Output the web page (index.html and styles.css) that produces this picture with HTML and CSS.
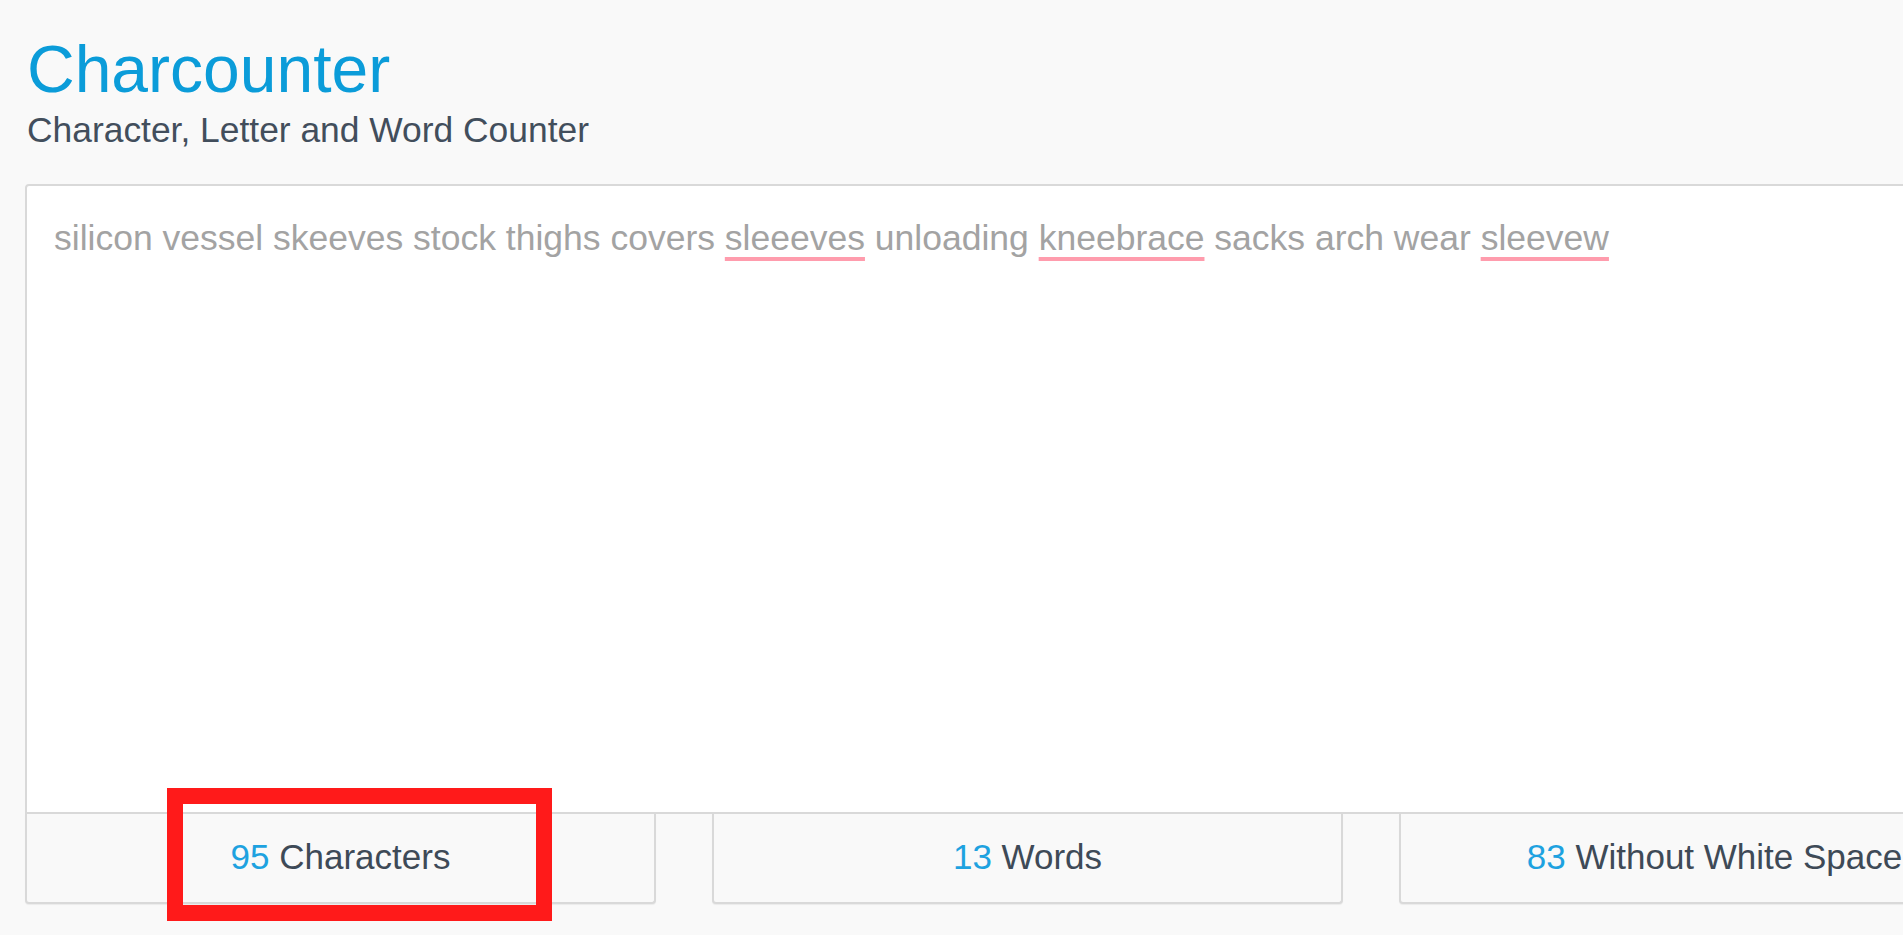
FILE: index.html
```html
<!DOCTYPE html>
<html lang="en">
<head>
    <meta charset="UTF-8">
    <meta name="viewport" content="width=device-width, initial-scale=1.0">
    <title>Charcounter</title>
    <link rel="stylesheet" href="styles.css">
</head>
<body>
    <div class="page">
        <h1 class="title">Charcounter</h1>
        <p class="subtitle">Character, Letter and Word Counter</p>

        <div class="editor">silicon vessel skeeves stock thighs covers <span class="misspelled">sleeeves</span> unloading <span class="misspelled">kneebrace</span> sacks arch wear <span class="misspelled">sleevew</span></div>

        <div class="stats">
            <div class="stat">
                <span class="count">95</span> Characters
                <div class="highlight"></div>
            </div>
            <div class="stat"><span class="count">13</span> Words</div>
            <div class="stat"><span class="count">83</span> Without White Space</div>
        </div>
    </div>
</body>
</html>
```

FILE: styles.css
```css
body {
    font-family: "Liberation Sans", Arial, sans-serif;
    background-color: #f9f9f9;
    margin: 0;
    overflow: hidden;
}
.page {
    width: 2005px;
    padding-left: 25px;
    padding-bottom: 40px;
}
.title {
    font-size: 66px;
    font-weight: normal;
    line-height: 66px;
    color: #0b9cd9;
    margin: 36px 0 0 2px;
}
.subtitle {
    font-size: 35.4px;
    line-height: 40px;
    color: #424e5c;
    margin: 8px 0 34px 2px;
}
.editor {
    height: 594px;
    background-color: #fff;
    border: 2px solid #d9d9d9;
    border-radius: 4px 4px 0 0;
    padding: 32px 27px 0;
    font-size: 35.5px;
    line-height: 40px;
    color: #a3a3a3;
    white-space: nowrap;
}
.misspelled {
    text-decoration: underline;
    text-decoration-color: #ff9cad;
    text-decoration-thickness: 4px;
    text-underline-offset: 7px;
    text-decoration-skip-ink: none;
}
.stats {
    display: grid;
    grid-template-columns: repeat(3, 631px);
    gap: 56px;
}
.stat {
    position: relative;
    background-color: #f9f9f9;
    border: 2px solid #d9d9d9;
    border-top: none;
    border-radius: 0 0 4px 4px;
    box-shadow: 0 1px 1px rgba(0, 0, 0, 0.06);
    padding: 23px 0 25px;
    font-size: 35px;
    line-height: 40px;
    color: #3e4a57;
    text-align: center;
    white-space: nowrap;
}
.count {
    color: #1ea2e0;
}
.highlight {
    position: absolute;
    left: 140px;
    top: -26px;
    width: 353px;
    height: 101px;
    border: 16px solid #ff1a1a;
}
```
